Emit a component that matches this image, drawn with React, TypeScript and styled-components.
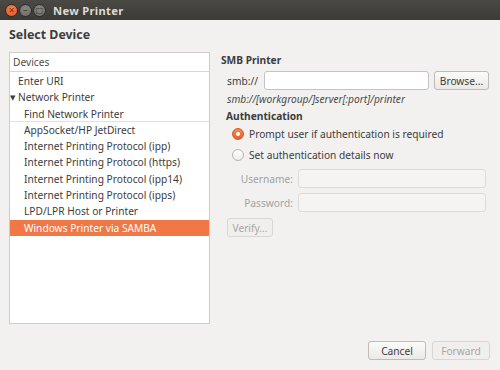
import React from 'react';
import styled, { createGlobalStyle } from 'styled-components';

const GlobalStyle = createGlobalStyle`
  html, body {
    margin: 0;
    padding: 0;
    background: #f2f1f0;
  }
  * {
    box-sizing: border-box;
  }
  body {
    font-family: "Noto Sans", "DejaVu Sans", sans-serif;
    font-size: 10.2px;
    color: #3c3c3c;
  }
`;

const Window = styled.div`
  width: 500px;
  height: 370px;
  display: flex;
  flex-direction: column;
  background: #f2f1f0;
  overflow: hidden;
`;

const TitleBar = styled.div`
  height: 20px;
  flex: none;
  display: flex;
  align-items: center;
  padding-left: 5px;
  background: linear-gradient(#4a4944, #3b3a36);
  color: #dfdbd2;
  font-weight: bold;
  font-size: 11.2px;
`;

const WinButton = styled.span<{ close?: boolean }>`
  width: 13px;
  height: 13px;
  border-radius: 50%;
  margin-right: 1px;
  display: flex;
  align-items: center;
  justify-content: center;
  background: ${p => (p.close ? 'radial-gradient(circle at 50% 35%, #f7845a, #e0511f)' : 'radial-gradient(circle at 50% 35%, #8a8882, #6a6964)')};
  border: 1px solid #2e2d2a;
  color: ${p => (p.close ? '#7a2a0c' : '#3c3b37')};
  font-size: 8px;
  line-height: 1;
`;

const Title = styled.span`
  margin-left: 6px;
  letter-spacing: 0.3px;
`;

const Body = styled.div`
  flex: 1;
  display: flex;
  flex-direction: column;
  padding: 6px 9px 9px 9px;
`;

const Heading = styled.div`
  font-size: 12.4px;
  font-weight: bold;
  color: #3c3c3c;
  height: 20px;
  margin-bottom: 6px;
`;

const Main = styled.div`
  display: flex;
  gap: 11px;
  height: 272px;
`;

const ListPanel = styled.div`
  width: 201px;
  flex: none;
  background: #fff;
  border: 1px solid #cfccc8;
  display: flex;
  flex-direction: column;
`;

const ListHeader = styled.div`
  height: 19px;
  line-height: 18px;
  padding-left: 3px;
  border-bottom: 1px solid #d8d6d2;
  color: #4c4c4c;
`;

const Items = styled.div`
  padding-top: 1px;
`;

const Item = styled.div<{ indent: number; selected?: boolean; divider?: boolean }>`
  height: 16.3px;
  line-height: 16px;
  padding-left: ${p => p.indent}px;
  background: ${p => (p.selected ? '#f07746' : 'transparent')};
  color: ${p => (p.selected ? '#fff' : '#3c3c3c')};
  border-bottom: ${p => (p.divider ? '1px solid #e4e2df' : 'none')};
  white-space: nowrap;
`;

const Arrow = styled.span`
  font-size: 7px;
  display: inline-block;
  width: 8px;
  vertical-align: 1px;
`;

const Form = styled.div`
  flex: 1;
  display: flex;
  flex-direction: column;
  padding-top: 1px;
`;

const SectionTitle = styled.div<{ indent?: number; h?: number }>`
  font-weight: bold;
  height: ${p => p.h || 16}px;
  margin-left: ${p => p.indent || 0}px;
`;

const Row = styled.div<{ indent?: number; top?: number }>`
  display: flex;
  align-items: center;
  gap: 5px;
  margin-left: ${p => p.indent || 0}px;
  margin-top: ${p => p.top || 0}px;
`;

const TextInput = styled.div<{ width: number; disabled?: boolean }>`
  width: ${p => p.width}px;
  height: 19px;
  background: ${p => (p.disabled ? '#f5f4f3' : '#fff')};
  border: 1px solid ${p => (p.disabled ? '#dcdad6' : '#c6c3be')};
  border-radius: 3px;
`;

const Button = styled.div<{ width: number; disabled?: boolean }>`
  width: ${p => p.width}px;
  height: 19px;
  display: flex;
  align-items: center;
  justify-content: center;
  border: 1px solid ${p => (p.disabled ? '#d9d7d3' : '#bfbcb7')};
  border-radius: 3px;
  background: ${p => (p.disabled ? '#f0efed' : 'linear-gradient(#fbfbfa, #ebe9e6)')};
  color: ${p => (p.disabled ? '#a8a6a2' : '#3c3c3c')};
`;

const SmbLabel = styled.span`
  width: 32px;
`;

const Hint = styled.div`
  font-style: italic;
  color: #4a4a4a;
  margin: 2px 0 0 6px;
  height: 17px;
`;

const Radio = styled.span<{ checked?: boolean }>`
  width: 12px;
  height: 12px;
  border-radius: 50%;
  flex: none;
  display: flex;
  align-items: center;
  justify-content: center;
  border: 1px solid ${p => (p.checked ? '#d25a24' : '#b9b6b1')};
  background: ${p => (p.checked ? 'linear-gradient(#f58a5a, #e5612a)' : 'linear-gradient(#ffffff, #eeece9)')};
  &::after {
    content: '';
    display: ${p => (p.checked ? 'block' : 'none')};
    width: 4px;
    height: 4px;
    border-radius: 50%;
    background: #fff;
  }
`;

const RadioRow = styled.div`
  display: flex;
  align-items: center;
  gap: 5px;
  height: 21px;
  margin-left: 11px;
`;

const FieldLabel = styled.span`
  width: 66px;
  text-align: right;
  color: #a3a19d;
`;

const Footer = styled.div`
  flex: 1;
  display: flex;
  justify-content: flex-end;
  align-items: flex-end;
  gap: 6px;
  padding-right: 1px;
  padding-bottom: 1px;
`;

const devices = [
  { label: 'Enter URI', indent: 8 },
  { label: 'Network Printer', indent: 0, arrow: true },
  { label: 'Find Network Printer', indent: 14, divider: true },
  { label: 'AppSocket/HP JetDirect', indent: 14 },
  { label: 'Internet Printing Protocol (ipp)', indent: 14 },
  { label: 'Internet Printing Protocol (https)', indent: 14 },
  { label: 'Internet Printing Protocol (ipp14)', indent: 14 },
  { label: 'Internet Printing Protocol (ipps)', indent: 14 },
  { label: 'LPD/LPR Host or Printer', indent: 14 },
  { label: 'Windows Printer via SAMBA', indent: 14, selected: true },
];

export default function App() {
  return (
    <Window>
      <GlobalStyle />
      <TitleBar>
        <WinButton close>✕</WinButton>
        <WinButton>−</WinButton>
        <WinButton>□</WinButton>
        <Title>New Printer</Title>
      </TitleBar>
      <Body>
        <Heading>Select Device</Heading>
        <Main>
          <ListPanel>
            <ListHeader>Devices</ListHeader>
            <Items>
              {devices.map(d => (
                <Item key={d.label} indent={d.indent} selected={d.selected} divider={d.divider}>
                  {d.arrow && <Arrow>▼</Arrow>}
                  {d.label}
                </Item>
              ))}
            </Items>
          </ListPanel>
          <Form>
            <SectionTitle>SMB Printer</SectionTitle>
            <Row indent={6} top={2}>
              <SmbLabel>smb://</SmbLabel>
              <TextInput width={165} />
              <Button width={55}>Browse...</Button>
            </Row>
            <Hint>smb://[workgroup/]server[:port]/printer</Hint>
            <SectionTitle indent={5} h={14}>Authentication</SectionTitle>
            <RadioRow>
              <Radio checked />
              <span>Prompt user if authentication is required</span>
            </RadioRow>
            <RadioRow>
              <Radio />
              <span>Set authentication details now</span>
            </RadioRow>
            <Row indent={6} top={4}>
              <FieldLabel>Username:</FieldLabel>
              <TextInput width={188} disabled />
            </Row>
            <Row indent={6} top={5}>
              <FieldLabel>Password:</FieldLabel>
              <TextInput width={188} disabled />
            </Row>
            <Row indent={6} top={6}>
              <Button width={46} disabled>Verify...</Button>
            </Row>
          </Form>
        </Main>
        <Footer>
          <Button width={58}>Cancel</Button>
          <Button width={58} disabled>Forward</Button>
        </Footer>
      </Body>
    </Window>
  );
}
